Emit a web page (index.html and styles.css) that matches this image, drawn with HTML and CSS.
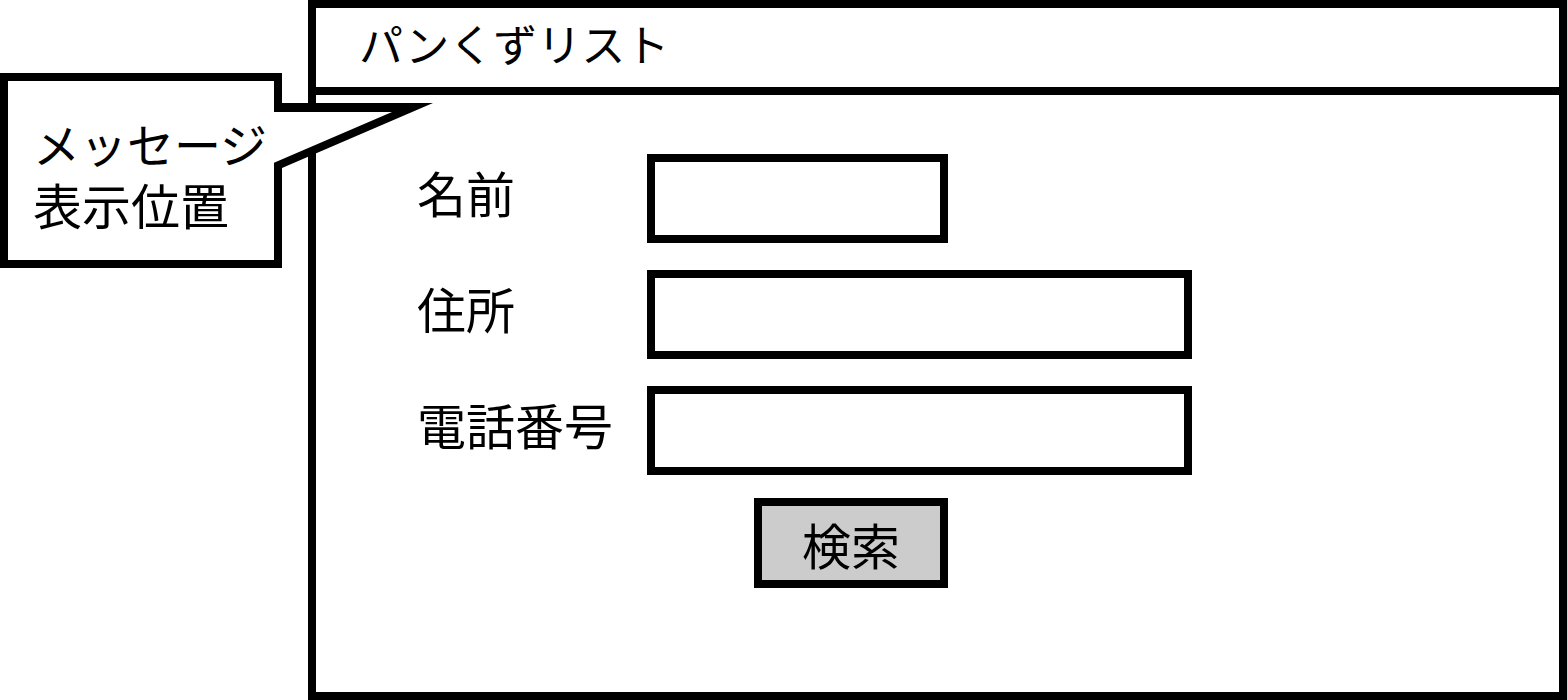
FILE: index.html
```html
<!DOCTYPE html>
<html lang="ja">
<head>
<meta charset="utf-8">
<title>検索画面</title>
<link rel="stylesheet" href="styles.css">
</head>
<body>
<div class="screen">
    <div class="frame">
        <div class="crumbs">パンくずリスト</div>
        <form class="search">
            <label class="label" for="name">名前</label>
            <input id="name" class="field short" type="text">
            <label class="label" for="address">住所</label>
            <input id="address" class="field" type="text">
            <label class="label" for="tel">電話番号</label>
            <input id="tel" class="field" type="text">
            <button class="btn-search" type="button">検索</button>
        </form>
    </div>
    <div class="callout">
        <svg class="callout-shape" width="440" height="200" viewBox="0 0 440 200">
            <polygon points="0,0 282,0 282,30 433,30 282,95 282,195 0,195" fill="#000"/>
            <polygon points="8,8 274,8 274,39 392,39 274,89.7 274,187 8,187" fill="#fff"/>
        </svg>
        <div class="callout-text">
            <div class="callout-line kana">メッセージ</div>
            <div class="callout-line">表示位置</div>
        </div>
    </div>
</div>
</body>
</html>
```

FILE: styles.css
```css
body, html {
    margin: 0;
    padding: 0;
    height: 100%;
    overflow: hidden;
    background: #fff;
}
.screen {
    position: relative;
    height: 700px;
    font-family: "Noto Sans CJK JP", "Noto Sans", sans-serif;
    font-size: 49px;
    color: #000;
}
.frame {
    margin-left: 308px;
    height: 700px;
    border: 8px solid #000;
    box-sizing: border-box;
}
.crumbs {
    height: 87px;
    box-sizing: border-box;
    border-bottom: 8px solid #000;
    padding: 0 0 8px 43px;
    font-size: 44px;
    line-height: 71px;
}
.search {
    display: grid;
    grid-template-columns: 230px auto;
    align-items: center;
    row-gap: 27px;
    padding: 59px 0 0 101px;
}
.label {
    line-height: 1;
    margin-bottom: 14px;
}
.field {
    width: 545px;
    height: 89px;
    box-sizing: border-box;
    border: 8px solid #000;
    border-radius: 0;
    background: #fff;
    margin: 0;
    padding: 0 10px;
    outline: none;
    font: inherit;
}
.field.short {
    width: 301px;
}
.btn-search {
    grid-column: 2;
    justify-self: start;
    margin: -4px 0 0 107px;
    width: 194px;
    height: 90px;
    box-sizing: border-box;
    border: 8px solid #000;
    border-radius: 0;
    background: #cccccc;
    padding: 0;
    font: inherit;
    color: #000;
    line-height: 1;
}

/* speech balloon laid over the frame */
.callout {
    position: absolute;
    left: 0;
    top: 73px;
    width: 282px;
    height: 195px;
}
.callout-shape {
    position: absolute;
    left: 0;
    top: 0;
}
.callout-text {
    position: relative;
    padding: 45px 0 0 33px;
}
.callout-line {
    height: 61px;
    line-height: 50px;
}
.callout-line.kana {
    font-size: 47px;
}
```
